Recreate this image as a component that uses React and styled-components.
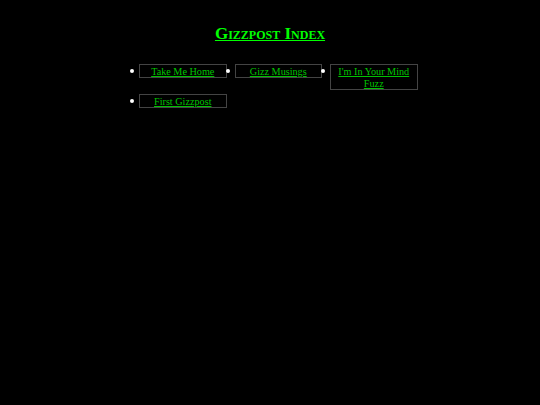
import React from "react";
import styled, { createGlobalStyle } from "styled-components";

const Global = createGlobalStyle`
  html, body { background: #000; }
  body { margin: 8px; font-family: "Liberation Serif", "Times New Roman", serif; color: #fff; }
`;

const Title = styled.h1`
  margin: 16px 0 0;
  text-align: center;
  font-size: 17px;
  line-height: 20px;
  font-weight: bold;
  font-variant: small-caps;
  color: #00ff00;
  text-decoration: underline;
`;

const List = styled.ul`
  margin: 20px 0 0 123px;
  padding: 0;
  width: 300px;
  display: flex;
  flex-wrap: wrap;
  align-items: flex-start;
  row-gap: 4px;
`;

const Item = styled.li`
  list-style: none;
  position: relative;
  box-sizing: border-box;
  padding-left: 8px;
  width: 95.5px;
  &::before {
    content: "";
    position: absolute;
    left: -1px;
    top: 5px;
    width: 4px;
    height: 4px;
    border-radius: 50%;
    background: #fff;
  }
`;

const Box = styled.a`
  display: block;
  box-sizing: border-box;
  width: 100%;
  border: 1px solid #444;
  text-align: center;
  font-size: 10.2px;
  line-height: 12px;
  padding: 1px 4px 0;
  height: ${(p) => (p.$lines || 1) * 12 + 2}px;
  color: #00c400;
  text-decoration: underline;
`;

const links = [
  { t: "Take Me Home" },
  { t: "Gizz Musings" },
  { t: "I'm In Your Mind Fuzz", lines: 2 },
  { t: "First Gizzpost" },
];

export default function App() {
  return (
    <>
      <Global />
      <Title>Gizzpost Index</Title>
      <List>
        {links.map((l) => (
          <Item key={l.t}>
            <Box href="#" $lines={l.lines}>{l.t}</Box>
          </Item>
        ))}
      </List>
    </>
  );
}
